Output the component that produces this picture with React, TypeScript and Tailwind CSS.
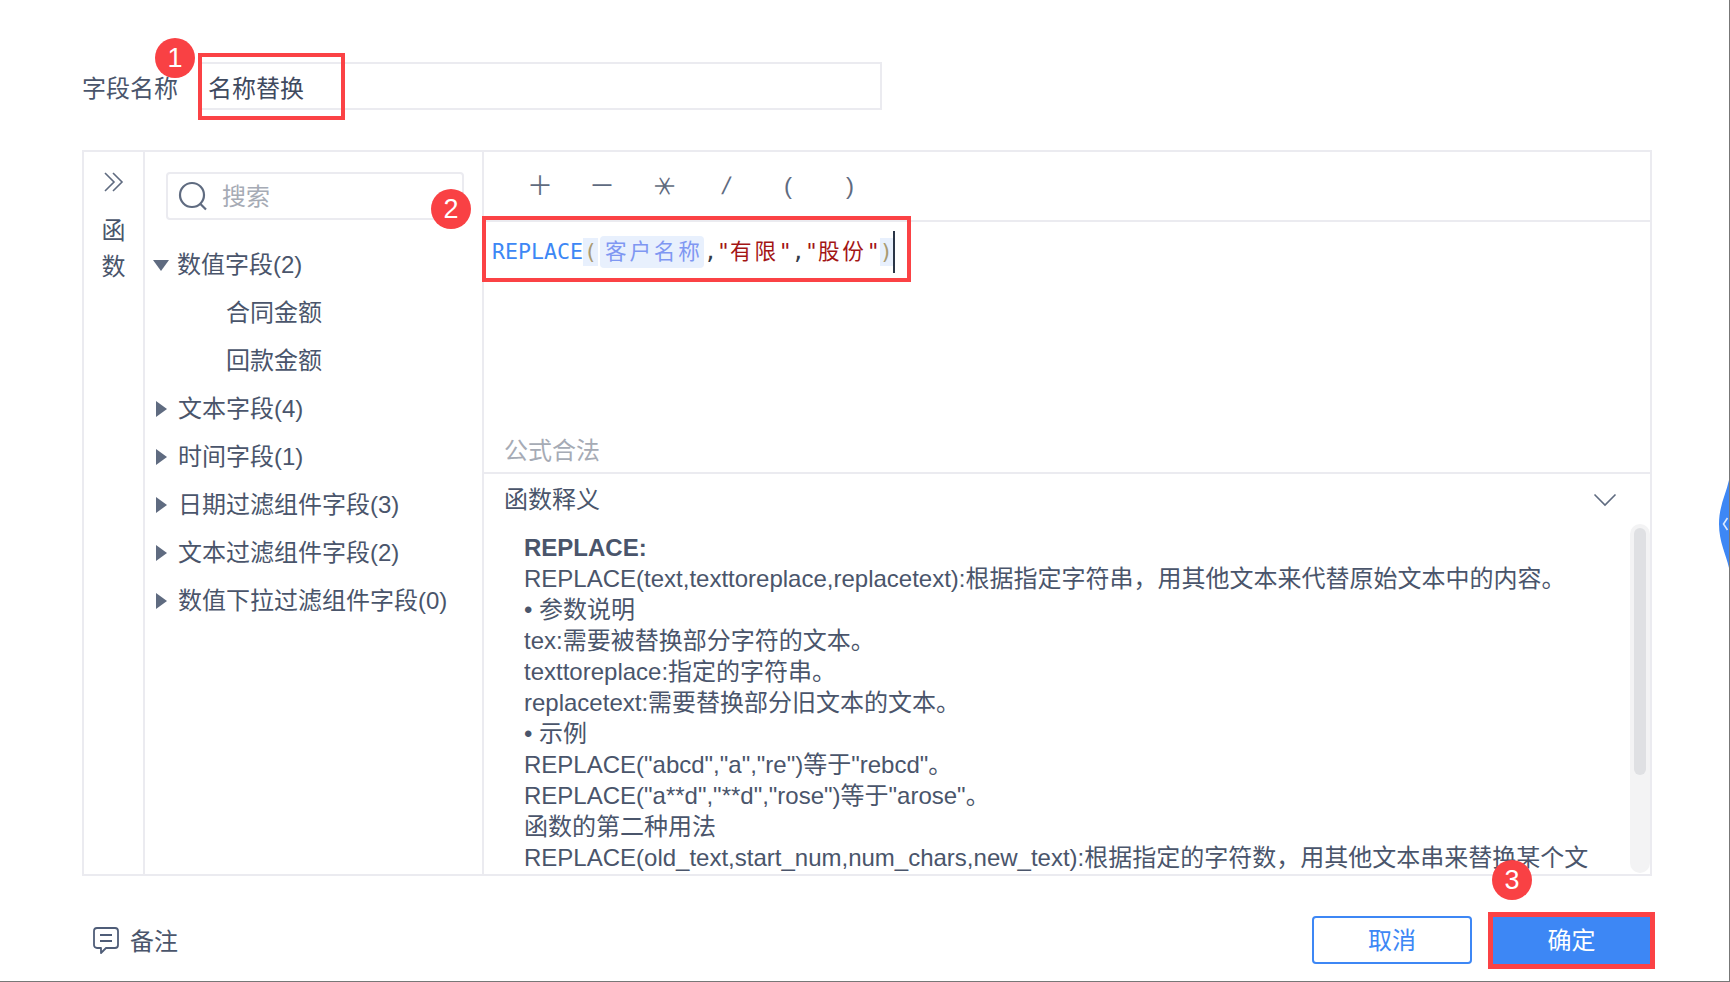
import React from "react";

const SANS = "[font-family:'Liberation_Sans','Noto_Sans_CJK_SC',sans-serif]";

function Down() {
  return (
    <svg width="16" height="11" viewBox="0 0 16 11" className="shrink-0">
      <path d="M0 0H16L8 11Z" fill="#5f6b80" />
    </svg>
  );
}
function Right() {
  return (
    <svg width="11" height="16" viewBox="0 0 11 16" className="shrink-0 ml-[3px] mr-[3px]">
      <path d="M0 0L11 8L0 16Z" fill="#5f6b80" />
    </svg>
  );
}

function Group({ label, open }: { label: string; open?: boolean }) {
  return (
    <div className="h-[48px] flex items-center gap-[8px] pl-[8px] whitespace-nowrap">
      {open ? <Down /> : <Right />}
      <span>{label}</span>
    </div>
  );
}
function Leaf({ label }: { label: string }) {
  return <div className="h-[48px] flex items-center pl-[81px]">{label}</div>;
}

const lines = [
  "REPLACE(text,texttoreplace,replacetext):根据指定字符串，用其他文本来代替原始文本中的内容。",
  "• 参数说明",
  "tex:需要被替换部分字符的文本。",
  "texttoreplace:指定的字符串。",
  "replacetext:需要替换部分旧文本的文本。",
  "• 示例",
  'REPLACE("abcd","a","re")等于"rebcd"。',
  'REPLACE("a**d","**d","rose")等于"arose"。',
  "函数的第二种用法",
  "REPLACE(old_text,start_num,num_chars,new_text):根据指定的字符数，用其他文本串来替换某个文",
];

export default function App() {
  return (
    <div
      lang="zh-CN"
      className={`relative w-[1730px] h-[982px] overflow-hidden bg-white text-[24px] leading-[32px] text-[#4a556b] border-r border-b border-[#777777] ${SANS}`}
    >
      {/* name row */}
      <div className="flex items-center pt-[62px] pl-[82px]">
        <div className="w-[118px] mt-[5px]">字段名称</div>
        <div className="w-[682px] h-[48px] border-2 border-[#ebebf0] flex items-center pl-[6px] text-[#3f4a5f] pt-[5px]">
          名称替换
        </div>
      </div>

      {/* main panel */}
      <div className="mt-[40px] ml-[82px] w-[1570px] h-[726px] border-2 border-[#ebebf0] flex">
        {/* function rail */}
        <div className="w-[61px] shrink-0 border-r-2 border-[#ebebf0] flex flex-col items-center">
          <svg width="22" height="20" viewBox="0 0 22 20" fill="none" stroke="#5f6b80" strokeWidth="1.6" className="mt-[20px]">
            <path d="M2 1L11 10L2 19M10 1L19 10L10 19" />
          </svg>
          <div className="mt-[21px] h-[36px] leading-[36px]">函</div>
          <div className="h-[36px] leading-[36px]">数</div>
        </div>

        {/* fields */}
        <div className="w-[339px] shrink-0 border-r-2 border-[#ebebf0] flex flex-col">
          <div className="mt-[20px] ml-[21px] w-[298px] h-[48px] border-2 border-[#ebebf0] rounded-[4px] flex items-center pl-[10px] gap-[14px]">
            <svg width="30" height="30" viewBox="0 0 30 30" fill="none" stroke="#5f6b80" strokeWidth="2.2" className="shrink-0">
              <circle cx="14" cy="14" r="12" />
              <path d="M22.5 23L28 28.5" />
            </svg>
            <span className="text-[#a6abb5] mt-[1px]">搜索</span>
          </div>
          <div className="mt-[21px]">
            <Group label="数值字段(2)" open />
            <Leaf label="合同金额" />
            <Leaf label="回款金额" />
            <Group label="文本字段(4)" />
            <Group label="时间字段(1)" />
            <Group label="日期过滤组件字段(3)" />
            <Group label="文本过滤组件字段(2)" />
            <Group label="数值下拉过滤组件字段(0)" />
          </div>
        </div>

        {/* editor */}
        <div className="flex-1 min-w-0 flex flex-col">
          <div className="h-[70px] shrink-0 border-b-2 border-[#ebebf0] flex items-center pl-[25px] text-[#5f6b80]">
            <span className="w-[62px] text-center text-[26px]">＋</span>
            <span className="w-[62px] text-center text-[26px]">－</span>
            <span className="w-[62px] text-center text-[25px]"><span className="inline-block rotate-90">＊</span></span>
            <span className="w-[62px] text-center text-[24px]"><span className="inline-block -skew-x-12">/</span></span>
            <span className="w-[62px] text-center">(</span>
            <span className="w-[62px] text-center">)</span>
          </div>

          <div className="h-[252px] shrink-0 border-b-2 border-[#ebebf0] flex flex-col justify-between">
            <div className="mt-[14px] ml-[8px] flex items-center h-[32px] text-[21.6px] whitespace-nowrap [font-family:'DejaVu_Sans_Mono','Noto_Sans_CJK_SC',monospace]">
              <span className="text-[#3d87f5]">REPLACE</span>
              <span className="bg-[#e8f0fd] text-[#a89a72] h-[28px] leading-[28px] w-[15px] text-center">(</span>
              <span className="ml-[2px] bg-[#e8f0fd] text-[#7f97f2] h-[32px] leading-[32px] w-[104px] rounded-[4px] pl-[5px] tracking-[2.8px]">客户名称</span>
              <span className="text-[#333a47]">,</span>
              <span className="text-[#a31515]">"<span className="tracking-[2.8px]">有限</span>"</span>
              <span className="text-[#333a47]">,</span>
              <span className="text-[#a31515]">"<span className="tracking-[2.8px]">股份</span>"</span>
              <span className="bg-[#e8f0fd] text-[#a89a72] h-[28px] leading-[28px] w-[13px] text-center">)</span>
              <span className="w-[2px] h-[42px] bg-[#2a3547]" />
            </div>
            <div className="ml-[20px] mb-[5px] text-[#a6abb5]">公式合法</div>
          </div>

          {/* explanation */}
          <div className="flex-1 min-h-0 flex flex-col overflow-hidden">
            <div className="h-[50px] shrink-0 flex items-center justify-between pl-[20px] pr-[33px] pt-[2px]">
              <span>函数释义</span>
              <svg width="24" height="14" viewBox="0 0 24 14" fill="none" stroke="#5f6b80" strokeWidth="1.6">
                <path d="M1.5 1.5L12 12L22.5 1.5" />
              </svg>
            </div>
            <div className="flex-1 min-h-0 flex pl-[40px] overflow-hidden">
              <div className="flex-1 min-w-0 pt-[8px] leading-[31px] whitespace-nowrap overflow-hidden">
                <div className="font-bold">REPLACE:</div>
                {lines.map((l) => (
                  <div key={l}>{l}</div>
                ))}
              </div>
              <div className="w-[20px] h-[349px] shrink-0 bg-[#f3f3f4] rounded-[10px] pt-[4px] flex justify-center">
                <div className="w-[12px] h-[247px] rounded-[6px] bg-[#dfe0e3]" />
              </div>
            </div>
          </div>
        </div>
      </div>

      {/* footer */}
      <div className="mt-[40px] pl-[93px] pr-[79px] flex items-center justify-between">
        <div className="flex items-center gap-[11px]">
          <svg width="26" height="27" viewBox="0 0 26 27" fill="none" stroke="#4f5d78" strokeWidth="1.8" strokeLinejoin="round">
            <path d="M4 1H22A3 3 0 0 1 25 4V18A3 3 0 0 1 22 21H13L8 26V21H4A3 3 0 0 1 1 18V4A3 3 0 0 1 4 1Z" />
            <path d="M7 8H19M7 14H19" />
          </svg>
          <span className="mt-[3px]">备注</span>
        </div>
        <div className="flex items-center gap-[20px]">
          <button className="w-[160px] h-[48px] border-2 border-[#3d87f5] rounded-[4px] text-[#3d87f5] pt-[1px]">取消</button>
          <button className="w-[158px] h-[47px] bg-[#3d87f5] text-white pt-[1px] pl-[1px]">确定</button>
        </div>
      </div>

      {/* annotations */}
      <div className="absolute left-[198px] top-[53px] w-[147px] h-[67px] border-[4px] border-[#fb4245]" />
      <div className="absolute left-[482px] top-[216px] w-[429px] h-[66px] border-[4px] border-[#fb4245]" />
      <div className="absolute left-[1488px] top-[912px] w-[167px] h-[57px] border-[5px] border-[#fb4245]" />
      <div className="absolute left-[155px] top-[38px] w-[40px] h-[40px] rounded-full bg-[#f94144] text-white text-[27px] flex items-center justify-center">1</div>
      <div className="absolute left-[431px] top-[189px] w-[40px] h-[40px] rounded-full bg-[#f94144] text-white text-[27px] flex items-center justify-center">2</div>
      <div className="absolute left-[1492px] top-[860px] w-[40px] h-[40px] rounded-full bg-[#f94144] text-white text-[27px] flex items-center justify-center">3</div>

      {/* side tab */}
      <svg width="10" height="88" viewBox="0 0 10 88" className="absolute left-[1719px] top-[480px]">
        <path d="M10 0C7 14 0 26 0 44C0 62 7 74 10 88Z" fill="#3d87f5" />
        <path d="M8.5 38L4.5 44L8.5 50" fill="none" stroke="#dbe8fd" strokeWidth="1.6" />
      </svg>
      {/* window bottom edge */}
      <div className="absolute left-0 bottom-[-1px] w-[296px] h-[1px] bg-[#222222]" />
    </div>
  );
}
